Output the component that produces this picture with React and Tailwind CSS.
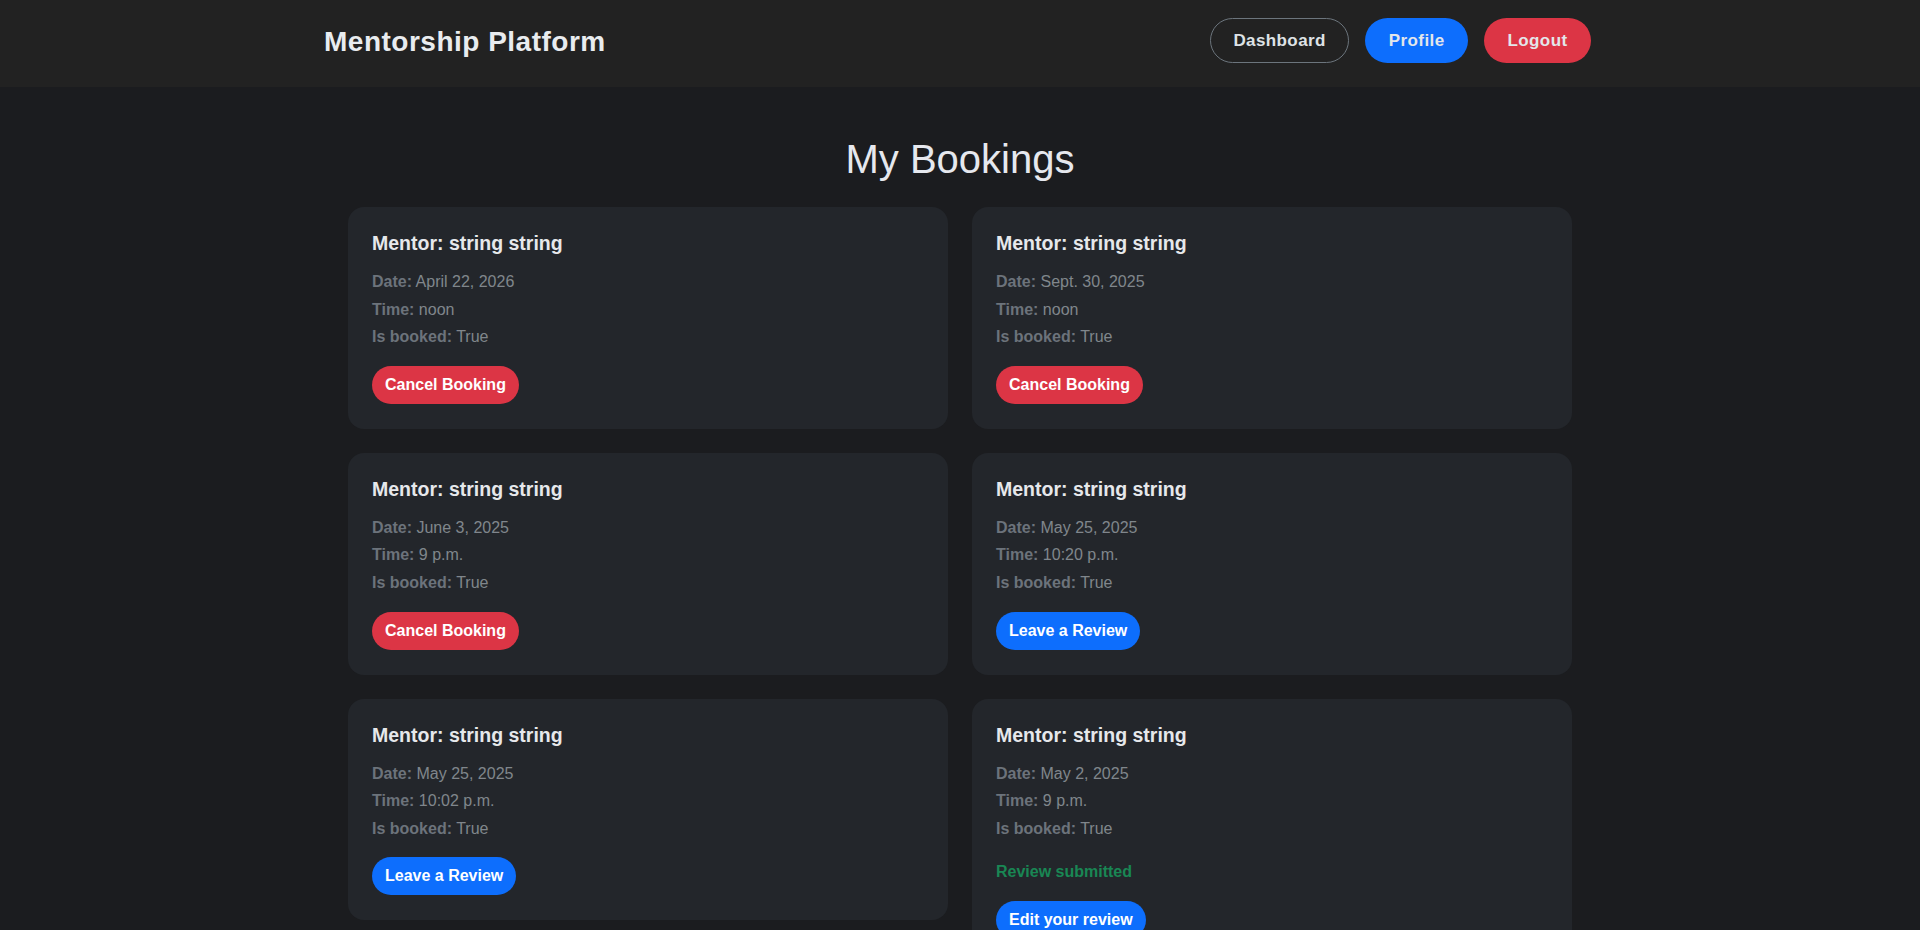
import React from "react";

const bookings = [
  { date: "April 22, 2026", time: "noon", action: "cancel" },
  { date: "Sept. 30, 2025", time: "noon", action: "cancel" },
  { date: "June 3, 2025", time: "9 p.m.", action: "cancel" },
  { date: "May 25, 2025", time: "10:20 p.m.", action: "review" },
  { date: "May 25, 2025", time: "10:02 p.m.", action: "review" },
  { date: "May 2, 2025", time: "9 p.m.", action: "submitted" },
];

function Line({ label, value }) {
  return (
    <p className="text-[16px] leading-[27.6px] text-[#80868c]">
      <strong className="font-bold text-[#6c737b]">{label}</strong> {value}
    </p>
  );
}

function Card({ b }) {
  return (
    <div className="rounded-2xl bg-[#23262b] px-6 pt-6 pb-[25px]">
      <h3 className="text-[19.5px] font-bold leading-[24px] text-[#e6e8eb] mb-[13px]">
        Mentor: string string
      </h3>
      <Line label="Date:" value={b.date} />
      <Line label="Time:" value={b.time} />
      <Line label="Is booked:" value="True" />
      {b.action === "cancel" && (
        <button className="mt-[15px] rounded-full border border-transparent bg-[#dc3545] px-3 py-1.5 text-[16px] font-bold leading-6 text-white">
          Cancel Booking
        </button>
      )}
      {b.action === "review" && (
        <button className="mt-[15px] rounded-full border border-transparent bg-[#0d6efd] px-3 py-1.5 text-[16px] font-bold leading-6 text-white">
          Leave a Review
        </button>
      )}
      {b.action === "submitted" && (
        <div>
          <p className="mt-[18px] text-[16px] font-bold leading-6 text-[#198754]">
            Review submitted
          </p>
          <button className="mt-[17px] rounded-full border border-transparent bg-[#0d6efd] px-3 py-1.5 text-[16px] font-bold leading-6 text-white">
            Edit your review
          </button>
        </div>
      )}
    </div>
  );
}

export default function App() {
  return (
    <div className="min-h-screen bg-[#1b1c1f] font-['Liberation_Sans',Arial,sans-serif] pb-10">
      <header className="h-[87px] bg-[#222222]">
        <div className="mx-auto flex max-w-[1320px] items-start justify-between px-6 pt-[18px]">
          <h1 className="mt-[7px] text-[28px] font-bold leading-[34px] tracking-[0.5px] text-[#e9ecef]">
            Mentorship Platform
          </h1>
          <nav className="mr-[5px] flex gap-4">
            <button className="rounded-full border border-[#6c757d] bg-transparent px-[22.5px] pt-[9px] pb-[7.5px] text-[17px] font-bold leading-[26px] tracking-[0.4px] text-[#dee2e6]">
              Dashboard
            </button>
            <button className="rounded-full border border-transparent bg-[#0d6efd] px-[22.5px] pt-[9px] pb-[7.5px] text-[17px] font-bold leading-[26px] tracking-[0.4px] text-[#e3e6ea]">
              Profile
            </button>
            <button className="rounded-full border border-transparent bg-[#dc3545] px-[22.5px] pt-[9px] pb-[7.5px] text-[17px] font-bold leading-[26px] tracking-[0.4px] text-[#e3e6ea]">
              Logout
            </button>
          </nav>
        </div>
      </header>
      <main className="mx-auto max-w-[1320px] px-12">
        <h2 className="mt-12 mb-6 text-center text-[40px] font-normal leading-[48px] text-[#e6e8ee]">
          My Bookings
        </h2>
        <div className="grid grid-cols-2 items-start gap-6">
          {bookings.map((b, i) => (
            <Card key={i} b={b} />
          ))}
        </div>
      </main>
    </div>
  );
}
